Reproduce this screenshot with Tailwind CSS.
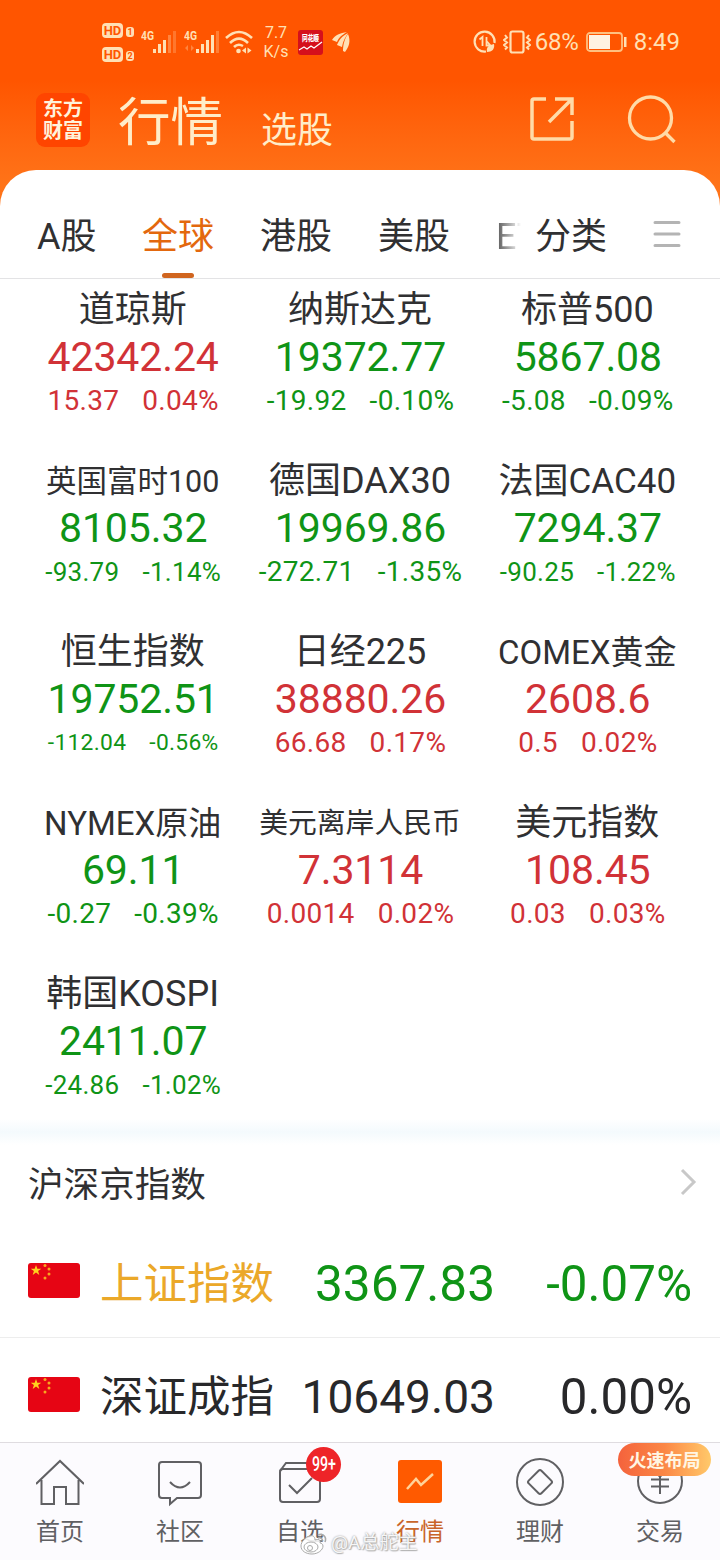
<!DOCTYPE html>
<html lang="zh-CN">
<head>
  <meta charset="UTF-8" />
  <meta name="viewport" content="width=device-width, initial-scale=1.0" />
  <title>行情</title>
  <script src="https://cdn.jsdelivr.net/npm/@tailwindcss/browser@4"></script>
</head>
<body class="bg-white text-[#303032] font-['Roboto','Noto_Sans_CJK_SC',sans-serif]">
  <div class="w-[720px] h-[1560px] flex flex-col overflow-hidden">

    <!-- orange header -->
    <header class="h-[230px] shrink-0 -mb-[60px] bg-linear-to-b from-[#ff5500] from-35% to-[#ff7318] to-80% text-[#ffedc9]">
      <!-- status bar -->
      <div class="h-[84px] flex items-center justify-between pl-[102px] pr-10 text-[#ffe0b4]">
        <div class="flex items-center">
          <div class="flex flex-col gap-[9px] w-[34px]">
            <div class="flex items-center gap-[3px] h-[15px]">
              <span class="bg-[#ffe0b4] text-[#ff5500] rounded-[4px] w-[21px] h-[15px] text-[13px] leading-[15px] font-bold text-center">HD</span>
              <span class="bg-[#ffe0b4] text-[#ff5500] rounded-[3px] w-2 h-[10px] mt-1 text-[9px] leading-[10px] font-bold text-center">1</span>
            </div>
            <div class="flex items-center gap-[3px] h-[15px]">
              <span class="bg-[#ffe0b4] text-[#ff5500] rounded-[4px] w-[21px] h-[15px] text-[13px] leading-[15px] font-bold text-center">HD</span>
              <span class="bg-[#ffe0b4] text-[#ff5500] rounded-[3px] w-2 h-[10px] mt-1 text-[9px] leading-[10px] font-bold text-center">2</span>
            </div>
          </div>
          <svg class="ml-[5px]" width="37" height="26" viewBox="0 0 37 26" fill="currentColor">
            <text x="0" y="11" font-size="12" font-weight="700" textLength="13" lengthAdjust="spacingAndGlyphs">4G</text>
            <rect x="12" y="20" width="3" height="4" /><rect x="17" y="15" width="3" height="9" /><rect x="22" y="11" width="3" height="13" />
            <rect x="27" y="6" width="3" height="18" opacity=".35" /><rect x="32" y="2" width="3" height="22" opacity=".25" />
          </svg>
          <svg class="ml-[6px]" width="37" height="26" viewBox="0 0 37 26" fill="currentColor">
            <text x="0" y="11" font-size="12" font-weight="700" textLength="13" lengthAdjust="spacingAndGlyphs">4G</text>
            <path d="M1 19l3-3v6zM10 19l-3-3v6z" opacity=".35" />
            <rect x="12" y="20" width="3" height="4" /><rect x="17" y="15" width="3" height="9" /><rect x="22" y="11" width="3" height="13" />
            <rect x="27" y="6" width="3" height="18" /><rect x="32" y="2" width="3" height="22" opacity=".3" />
          </svg>
          <svg class="ml-[4px]" width="28" height="26" viewBox="0 0 28 26" fill="none" stroke="currentColor" stroke-width="2.6">
            <path d="M1 9Q14-3 27 9M5 14Q14 5 23 14M9 18Q13 14 18 17" />
            <circle cx="13.500" cy="22" r="2.300" fill="currentColor" stroke="none" />
            <path d="M17 21.500l4-3v6zM26.500 21.500l-4-3v6z" fill="currentColor" stroke="none" />
          </svg>
          <div class="ml-[9px] w-[28px] text-[16px] leading-[19px] text-center">7.7<br />K/s</div>
          <svg class="ml-[8px]" width="25" height="25" viewBox="0 0 25 25">
            <rect width="25" height="25" rx="3" fill="#d5101c" />
            <text x="4" y="11" font-size="8" font-weight="900" fill="#fff" textLength="17" lengthAdjust="spacingAndGlyphs">同花顺</text>
            <path d="M1 20l5-3 3 2 4-3 3 2 8-6" fill="none" stroke="#fff" stroke-width="1.300" />
          </svg>
          <svg class="ml-[8px]" width="20" height="22" viewBox="0 0 20 22" fill="currentColor">
            <path d="M1 9C4 4 9 2 16 1C11 4 8 6 6 11ZM6 14C8 9 11 5 17 2C14 7 12 10 11 16ZM12 20C12 13 14 7 17 3C20 10 18 16 14 21Z" />
          </svg>
        </div>
        <div class="flex items-center">
          <svg width="24" height="24" viewBox="0 0 24 24" fill="none" stroke="currentColor" stroke-width="2.200">
            <path d="M21.500 13A10 10 0 1 0 13 21.500" />
            <path d="M6.500 9.500l3-2.500v9M13.500 7v8.500h4l-4-4.500" stroke-width="1.800" />
            <path d="M14 22c-1-5 2-7 7-8 1 5-2 8-7 8z" fill="currentColor" stroke="none" />
          </svg>
          <svg class="ml-[6px]" width="28" height="24" viewBox="0 0 28 24" fill="none" stroke="currentColor" stroke-width="2.200">
            <rect x="7.500" y="1.500" width="13" height="21" rx="2" />
            <path d="M2 5l2 2.500-3 2.500 3 2.500-3 2.500 3 2.500-2 2M26 5l-2 2.500 3 2.500-3 2.500 3 2.500-3 2.500 2 2" stroke-width="2" />
          </svg>
          <span class="ml-[4px] text-[24px] leading-[28px] tracking-[-0.2px]">68%</span>
          <svg class="ml-[7px]" width="41" height="20" viewBox="0 0 41 20">
            <rect x="1" y="1" width="35" height="18" rx="3" fill="none" stroke="#ffc080" stroke-width="1.800" />
            <rect x="3" y="3" width="21" height="14" fill="#fff2e2" /><rect x="38" y="5" width="2.500" height="10" fill="#ffe0b4" />
          </svg>
          <span class="ml-[7px] text-[24px] leading-[28px]">8:49</span>
        </div>
      </div>
      <!-- title bar -->
      <div class="h-[72px] flex items-center pl-9 pr-11">
        <div class="w-[54px] h-[54px] rounded-[9px] bg-[#ff4500] text-[#fff3dc] text-[20px] leading-[22px] font-bold text-center flex items-center justify-center">东方<br />财富</div>
        <span class="ml-[28px] mt-1.5 text-[52.5px] leading-[72px]">行情</span>
        <span class="ml-[38px] mt-[22px] text-[36px] leading-[44px]">选股</span>
        <svg class="ml-auto -mt-0.5" width="46" height="46" viewBox="0 0 46 46" fill="none" stroke="#ffdba8" stroke-width="3.500">
          <path d="M17 3H5Q3 3 3 5V41Q3 43 5 43H41Q43 43 43 41V25" /><path d="M26 3H43V19M43 3L20 26" />
        </svg>
        <svg class="ml-[52px] -mt-0.5" width="49" height="49" viewBox="0 0 49 49" fill="none" stroke="#ffdba8" stroke-width="3.300">
          <circle cx="23.500" cy="23" r="21" /><path d="M37.500 37L47.500 47" />
        </svg>
      </div>
    </header>

    <!-- market tabs -->
    <nav class="relative h-[109px] shrink-0 rounded-t-[36px] bg-white border-b border-[#e3e3e5] flex items-center pt-[26px] pl-[37px] text-[36px] leading-[50px]">
      <span class="w-[105px]">A股</span>
      <span class="w-[118px] h-[82px] flex flex-col justify-between text-[#e3680e]">
        <span class="mt-[16px]">全球</span>
        <i class="ml-5 w-8 h-[5px] rounded-full bg-[#d0651f]"></i>
      </span>
      <span class="w-[118px]">港股</span>
      <span class="w-[118px]">美股</span>
      <span class="w-[25px] overflow-hidden bg-linear-to-r from-[#555] to-white bg-clip-text text-transparent whitespace-nowrap">ET</span>
      <span class="ml-[14px]">分类</span>
      <svg class="ml-[46px] -mt-1.5" width="28" height="28" viewBox="0 0 28 28" stroke="#b4b4b4" stroke-width="3" stroke-linecap="round">
        <path d="M2 2.500H26M2 14H26M2 25.500H26" />
      </svg>
    </nav>

    <!-- global indices -->
    <main id="indices" class="h-[840px] shrink-0 grid grid-cols-3 auto-rows-[171px] px-[19px] bg-white overflow-hidden"></main>

    <div class="h-[26px] shrink-0 bg-linear-to-b from-white via-[#f4fafd] to-white"></div>

    <!-- mainland indices -->
    <section class="h-[297px] shrink-0">
      <div class="h-[80px] flex items-center justify-between pl-7 pr-[23px] text-[35.6px]">
        <span class="pt-0.5">沪深京指数</span>
        <svg class="-mt-1.5" width="18" height="28" viewBox="0 0 18 28" fill="none" stroke="#c8c8c8" stroke-width="3"><path d="M3 2L15 14L3 26" /></svg>
      </div>
      <div id="boards"></div>
    </section>

    <!-- bottom bar -->
    <footer class="relative h-[118px] shrink-0 grid grid-cols-6 bg-[#fcfbfe] border-t border-[#dfdce0] text-[24px] leading-[30px] text-[#606063]">
      <div class="flex flex-col items-center pt-4">
        <svg width="48" height="48" viewBox="0 0 48 48" fill="none" stroke="currentColor" stroke-width="2">
          <path d="M0 25L24 2L48 25M5.500 21V45H18V28H30V45H42.500V21" />
        </svg>
        <span class="mt-[10px]">首页</span>
      </div>
      <div class="flex flex-col items-center pt-4">
        <svg width="48" height="48" viewBox="0 0 48 48" fill="none" stroke="currentColor" stroke-width="2">
          <path d="M6 3H42Q45 3 45 6V36Q45 39 42 39H21L14 45V39H6Q3 39 3 36V6Q3 3 6 3Z" /><path d="M14 23Q24 34 34 23" />
        </svg>
        <span class="mt-[10px]">社区</span>
      </div>
      <div class="relative flex flex-col items-center pt-4">
        <svg width="48" height="48" viewBox="0 0 48 48" fill="none" stroke="currentColor" stroke-width="2">
          <rect x="4" y="10" width="40" height="33" rx="3" /><path d="M4 12L10 4H38L44 12M13 26L21 34L36 19" />
        </svg>
        <span class="mt-[10px]">自选</span>
        <b class="absolute left-[66px] top-[4px] w-[35px] h-[35px] rounded-full bg-[#ee2428] text-white flex items-center justify-center">
          <svg width="26" height="20" viewBox="0 0 26 20" fill="currentColor"><text x="1" y="16" font-size="20" font-weight="500" textLength="24" lengthAdjust="spacingAndGlyphs">99+</text></svg>
        </b>
      </div>
      <div class="flex flex-col items-center pt-4 text-[#c9652a]">
        <svg width="48" height="48" viewBox="0 0 48 48" fill="none">
          <rect x="2" y="1" width="44" height="43" rx="3" fill="#ff5a00" /><path d="M11 30L20 20L25 26L37 15" stroke="#ffd39a" stroke-width="2.500" />
        </svg>
        <span class="mt-[10px]">行情</span>
      </div>
      <div class="flex flex-col items-center pt-[15px]">
        <svg width="48" height="48" viewBox="0 0 48 48" fill="none" stroke="currentColor" stroke-width="2">
          <circle cx="24" cy="24" r="23" /><rect x="15" y="15" width="18" height="18" rx="2" transform="rotate(45 24 24)" />
        </svg>
        <span class="mt-[11px]">理财</span>
      </div>
      <div class="relative flex flex-col items-center pt-[15px]">
        <svg width="48" height="48" viewBox="0 0 48 48" fill="none" stroke="currentColor" stroke-width="2">
          <circle cx="24" cy="23" r="22" /><path d="M16 9L24 19L32 9M24 18V36M15 21.500H33M15 28.500H33" />
        </svg>
        <span class="mt-[11px]">交易</span>
        <b class="absolute left-[18px] top-0 w-[93px] h-[33px] rounded-full bg-linear-to-r from-[#f4623c] via-[#fb8746] to-[#ffc96a] text-[#fff6e4] text-[18px] leading-[35px] text-center">火速布局</b>
      </div>
      <!-- watermark -->
      <div class="absolute left-[300px] top-[87px] flex items-center gap-[3px] text-[19px] leading-[24px] text-white/90 [text-shadow:0_0_2px_#888,1px_1px_1px_#bbb]">
        <svg width="28" height="26" viewBox="0 0 28 26" fill="none" stroke="#aaa" stroke-width="1">
          <path d="M10 6C5 7 1 12 1 16C1 21 6 24 12 24C18 24 23 20 23 16C23 14 21 13 20 13C21 9 18 9 15 10C15 6 12 5 10 6Z" fill="#ffffffdd" />
          <ellipse cx="11" cy="17" rx="7" ry="5" /><circle cx="10" cy="18" r="2.500" /><path d="M18 5C23 3 27 7 25 12M18 8C21 7 23 9 22 11" stroke-width="1.600" />
        </svg>
        <span>@A总舵主</span>
      </div>
    </footer>
  </div>

  <script>
    const red = "text-[#d13237]";
    const green = "text-[#0f9416]";
    // name, name size, price, change, percent, colour, change size
    const indices = [
      ["道琼斯", "text-[36px]", "42342.24", "15.37", "0.04%", red, "text-[28px]"],
      ["纳斯达克", "text-[36px]", "19372.77", "-19.92", "-0.10%", green, "text-[28px]"],
      ["标普500", "text-[36px]", "5867.08", "-5.08", "-0.09%", green, "text-[28px]"],
      ["英国富时100", "text-[30.5px]", "8105.32", "-93.79", "-1.14%", green, "text-[26px]"],
      ["德国DAX30", "text-[36px]", "19969.86", "-272.71", "-1.35%", green, "text-[28px]"],
      ["法国CAC40", "text-[35px]", "7294.37", "-90.25", "-1.22%", green, "text-[26px]"],
      ["恒生指数", "text-[36px]", "19752.51", "-112.04", "-0.56%", green, "text-[22.800px]"],
      ["日经225", "text-[36px]", "38880.26", "66.68", "0.17%", red, "text-[28px]"],
      ["COMEX黄金", "text-[33px]", "2608.6", "0.5", "0.02%", red, "text-[28px]"],
      ["NYMEX原油", "text-[33px]", "69.11", "-0.27", "-0.39%", green, "text-[28px]"],
      ["美元离岸人民币", "text-[28.8px]", "7.3114", "0.0014", "0.02%", red, "text-[28px]"],
      ["美元指数", "text-[36px]", "108.45", "0.03", "0.03%", red, "text-[28px]"],
      ["韩国KOSPI", "text-[36px]", "2411.07", "-24.86", "-1.02%", green, "text-[26px]"],
    ];
    document.getElementById("indices").innerHTML = indices.map(([name, size, price, change, pct, color, small]) => `
      <div class="pt-2 flex flex-col items-center whitespace-nowrap">
        <div class="${size} leading-[47px]">${name}</div>
        <div class="${color} text-[41px] leading-[46px] tracking-[-0.1px] pl-px">${price}</div>
        <div class="${color} ${small} leading-[42px] tracking-[0.3px] flex gap-[23px] pl-px"><span>${change}</span><span>${pct}</span></div>
      </div>`).join("");

    const boards = [
      ["上证指数", "text-[#eba829]", "3367.83", "-0.07%", "text-[#0f9416]", "text-[49.500px]"],
      ["深证成指", "text-[#28282a]", "10649.03", "0.00%", "text-[#28282a]", "text-[46.100px]"],
    ];
    document.getElementById("boards").innerHTML = boards.map(([name, nameColor, price, pct, color, priceSize]) => `
      <div class="h-[113px] pt-[5px] flex items-center pl-7 pr-7 border-b border-[#ededed] last:border-0 text-[49.3px] leading-[60px]">
        <svg class="-mt-1.5" width="52" height="35" viewBox="0 0 52 35">
          <rect width="52" height="35" rx="3" fill="#e60514" />
          <path d="M8 2l1.300 3.800h4l-3.200 2.300 1.200 3.900L8 9.600 4.700 12l1.200-3.900L2.700 5.800h4z" fill="#ffd21e" />
          <g fill="#f7a81e"><circle cx="17" cy="2.500" r="1.500" /><circle cx="21" cy="6" r="1.500" /><circle cx="21" cy="11" r="1.500" /><circle cx="17" cy="15" r="1.500" /></g>
        </svg>
        <span class="ml-5 pt-0.5 w-[180px] text-[43.5px] ${nameColor}">${name}</span>
        <span class="w-[215px] text-right ${priceSize} ${color}">${price}</span>
        <span class="flex-1 text-right ${color}">${pct}</span>
      </div>`).join("");
  </script>
</body>
</html>
